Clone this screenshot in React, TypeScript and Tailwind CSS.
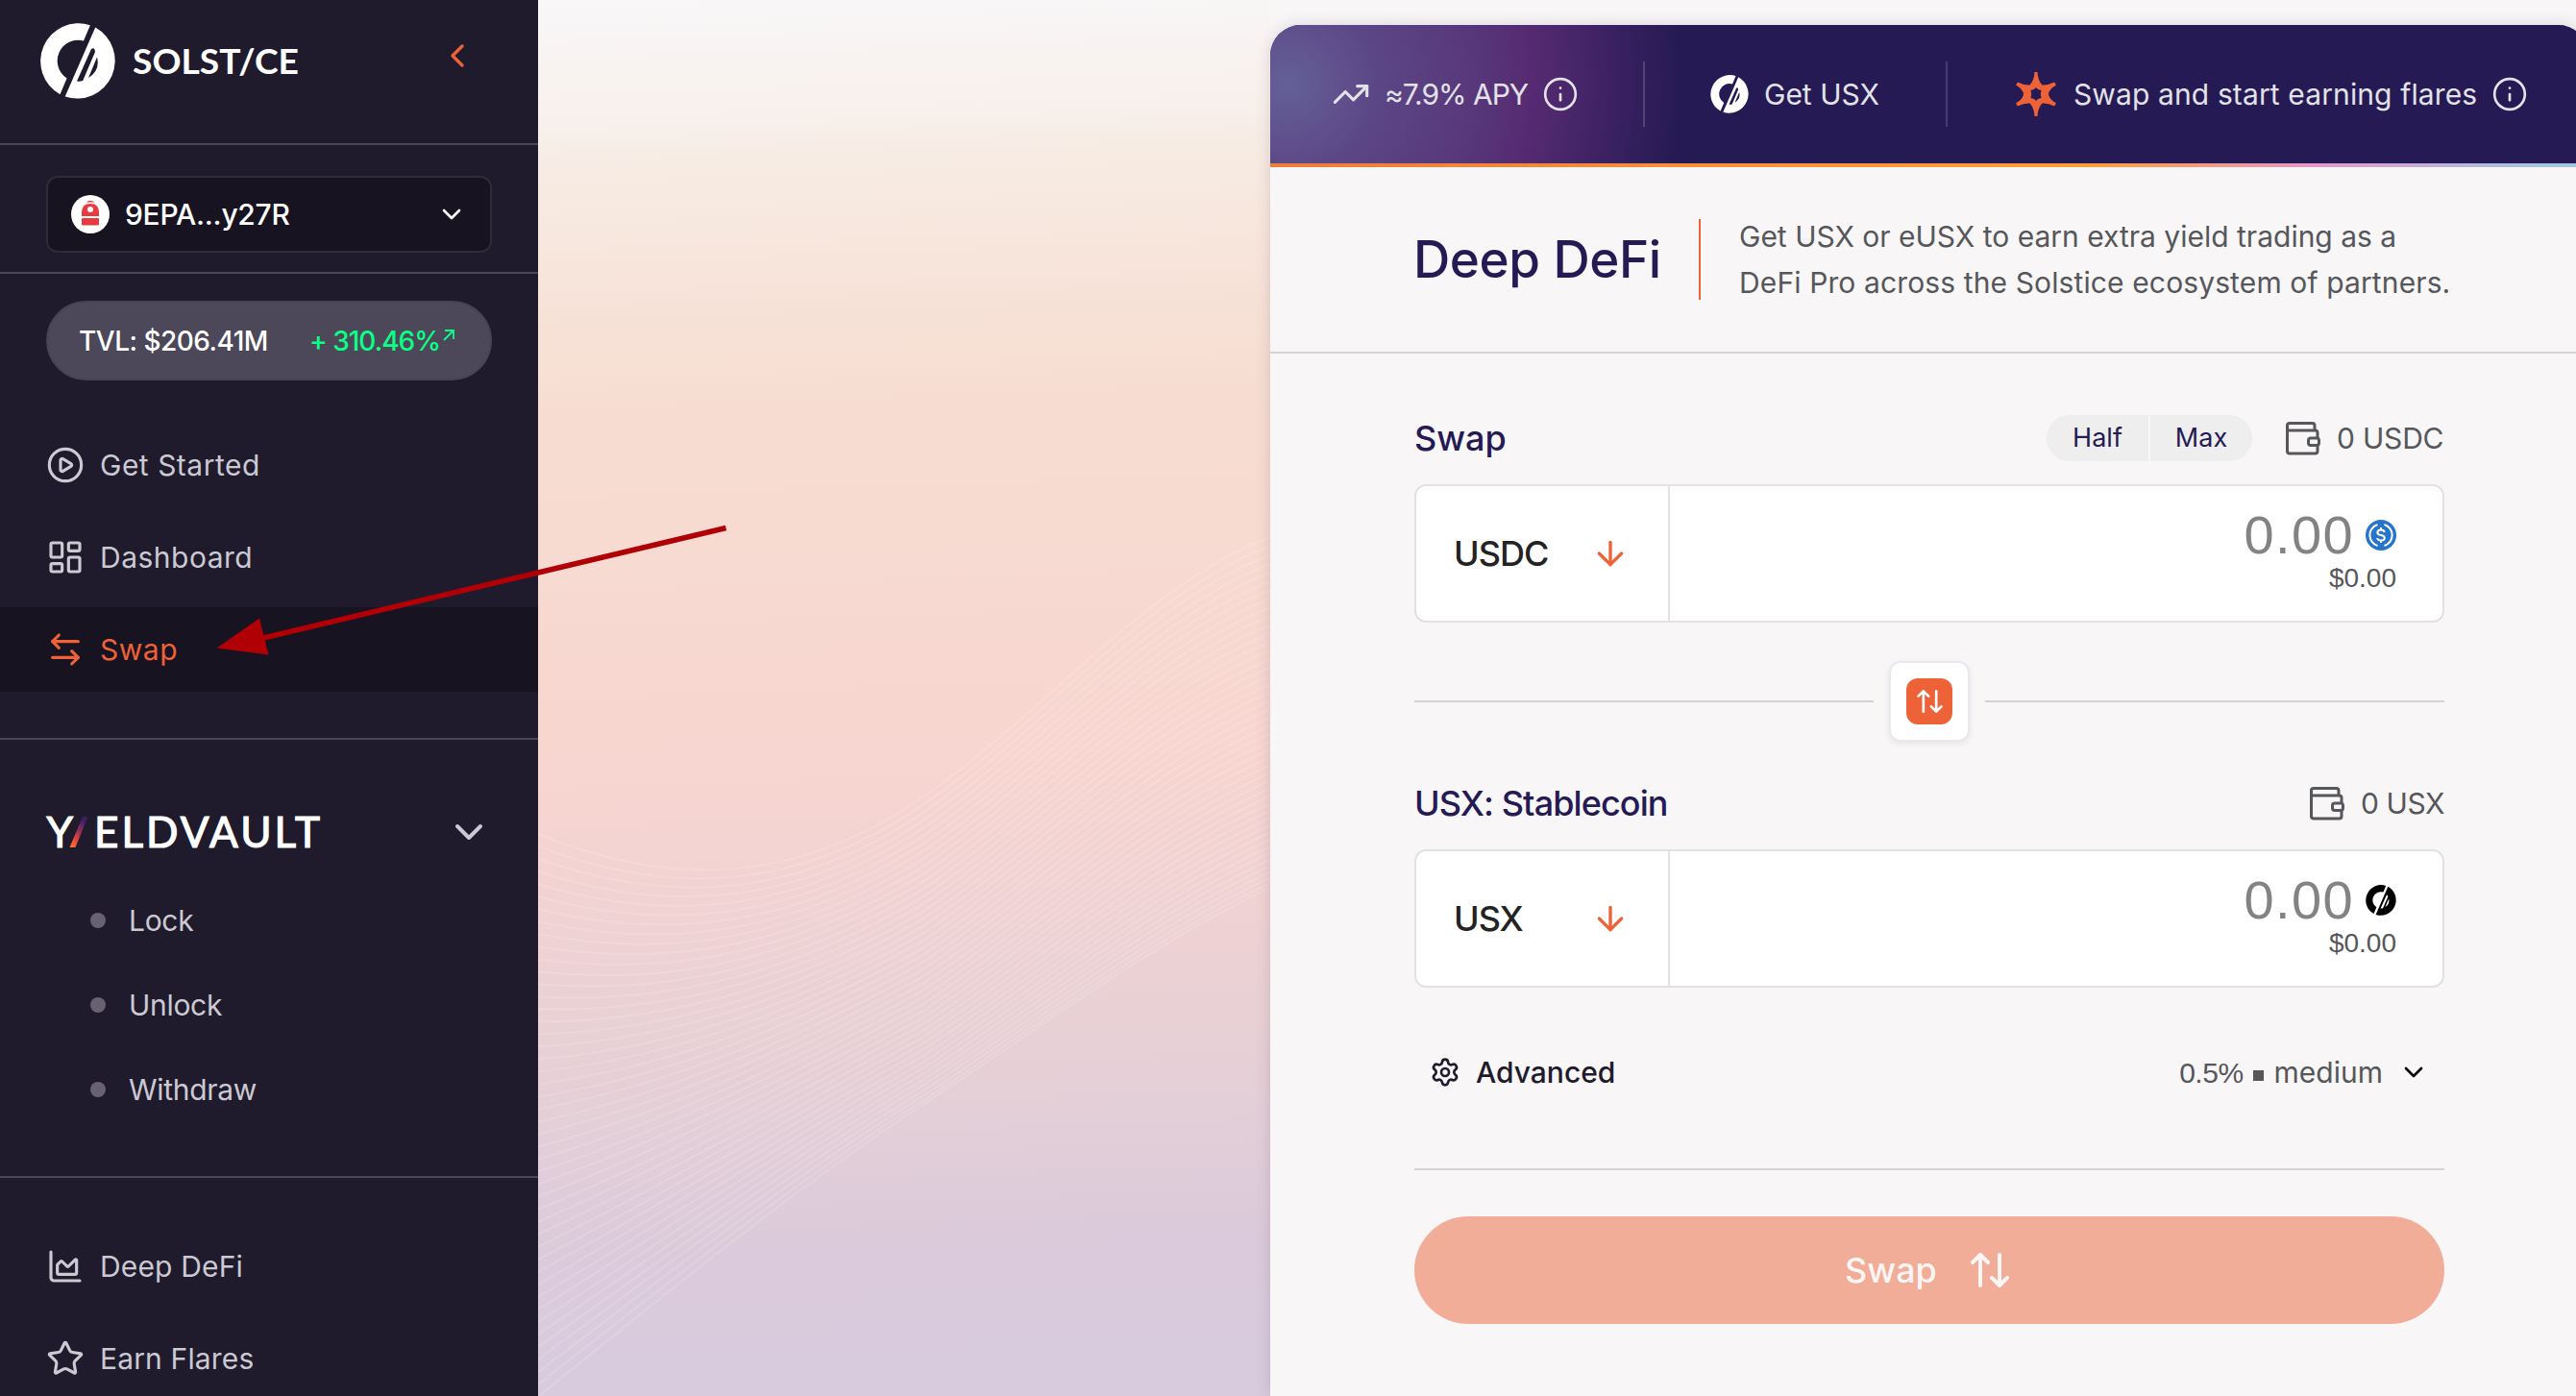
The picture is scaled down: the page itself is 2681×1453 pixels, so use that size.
import React, { useState } from "react";
import {
  ArrowDown,
  ArrowLeftRight,
  ChartArea,
  ChevronDown,
  ChevronLeft,
  CirclePlay,
  Info,
  LayoutDashboard,
  Settings,
  Star,
  TrendingUp,
} from "lucide-react";

const navItems = [
  { label: "Get Started", icon: CirclePlay },
  { label: "Dashboard", icon: LayoutDashboard },
  { label: "Swap", icon: ArrowLeftRight },
];

const vaultItems = ["Lock", "Unlock", "Withdraw"];

const moreItems = [
  { label: "Deep DeFi", icon: ChartArea },
  { label: "Earn Flares", icon: Star },
];

const SolsticeMark: React.FC<{ className?: string }> = ({ className }) => (
  <svg viewBox="0 0 78 79" className={className} fill="currentColor">
    <path d="M51.900 2.200A39.500 39.500 0 0 0 20.500 74.300L27.600 57.400A21.500 21.500 0 0 1 45 18.600Z" />
    <path
      fillRule="evenodd"
      d="M57.200 4.600A39.400 39.400 0 0 1 25.700 76.500ZM38 60.500 53 27Q56.500 24.500 57 30L44.200 60Q41 61 38 60.500ZM59 35.500Q62.500 49 50 57Z"
    />
  </svg>
);

const Wallet: React.FC = () => (
  <svg
    viewBox="0 0 36 35"
    className="h-[35px] w-9 shrink-0"
    fill="none"
    stroke="currentColor"
    strokeWidth="3"
    strokeLinejoin="round"
    strokeLinecap="round"
  >
    <path d="M30 8V4Q30 1.500 27.500 1.500H4Q1.500 1.500 1.500 4V30.500Q1.500 33 4 33H30.500Q33 33 33 30.500V25" />
    <path d="M1.500 9H30.500Q33 9 33 11.500V16.500" />
    <rect x="23.500" y="17" width="11" height="7.500" rx="2.500" />
  </svg>
);

const UpDown: React.FC<{ className?: string }> = ({ className }) => (
  <svg
    viewBox="0 0 40 36"
    className={className}
    fill="none"
    stroke="currentColor"
    strokeWidth="4"
    strokeLinecap="round"
    strokeLinejoin="round"
  >
    <path d="M10 34V2M2 10l8-8 8 8M30 2v32M22 26l8 8 8-8" />
  </svg>
);

const Flare: React.FC = () => (
  <svg viewBox="0 0 42 46" className="h-[46px] w-[42px]" fill="#ed6237">
    <path
      fillRule="evenodd"
      d="M19.500 0H22.500Q23 9 27.500 13.500Q33 14 40 10.500L42 13.500Q34.500 18 34 23Q34.500 28 42 32.500L40 35.500Q33 32 27.500 32.500Q23 37 22.500 46H19.500Q19 37 14.500 32.500Q9 32 2 35.500L0 32.500Q7.500 28 8 23Q7.500 18 0 13.500L2 10.500Q9 14 14.500 13.500Q19 9 19.500 0ZM21 16Q19.500 18.500 15.500 19Q17 23 15.500 27Q19.500 27.500 21 30Q22.500 27.500 26.500 27Q25 23 26.500 19Q22.500 18.500 21 16Z"
    />
  </svg>
);

const UsdcMark: React.FC = () => (
  <svg viewBox="0 0 32 32" className="size-8">
    <circle cx="16" cy="16" r="16" fill="#2775ca" />
    <g fill="none" stroke="#fff" strokeWidth="2">
      <path d="M12.500 5A11.500 11.500 0 0 0 12.500 27M19.500 5A11.500 11.500 0 0 1 19.500 27" />
      <path d="M19.700 13Q19.300 10.500 16 10.500Q12.400 10.500 12.400 13.200Q12.400 15.400 16 16Q19.800 16.600 19.800 19Q19.800 21.600 16 21.600Q12.500 21.600 12.200 19M16 8v2.500M16 21.600V24" />
    </g>
  </svg>
);

const WalletAvatar: React.FC = () => (
  <svg viewBox="0 0 40 40" className="size-10">
    <circle cx="20" cy="20" r="20" fill="#fff" />
    <path d="M15.500 7.500Q20 4 24.500 7.500Z" fill="#e63c41" />
    <path d="M11 22V18Q11 9 20 9Q29 9 29 18V22Z" fill="#e63c41" />
    <rect x="11" y="24" width="18" height="7.500" rx="1" fill="#e63c41" />
    <circle cx="20" cy="15" r="3" fill="#fff" />
  </svg>
);

// Fan of thin lines between an upper and a lower curve
const upper = [868, 925, 920, 830, 740, 600, 556];
const lower = [1454, 1340, 1235, 1150, 1065, 980, 920];
const Waves: React.FC = () => (
  <svg
    viewBox="560 0 762 1453"
    className="h-full w-[762px]"
    fill="none"
    stroke="#fff"
    strokeOpacity="0.14"
    strokeWidth="2"
  >
    {Array.from({ length: 46 }, (_, i) => {
      const t = i / 45;
      const y = upper.map((u, k) => {
        const e = k < 3 ? t : 1 - Math.pow(1 - t, 1.15);
        return (u + (lower[k] - u) * e).toFixed(1);
      });
      return (
        <path
          key={i}
          d={`M560 ${y[0]}C700 ${y[1]} 830 ${y[2]} 960 ${y[3]}C1090 ${y[4]} 1200 ${y[5]} 1330 ${y[6]}`}
        />
      );
    })}
  </svg>
);

const Sidebar: React.FC = () => {
  const [active, setActive] = useState("Swap");

  return (
    <aside className="flex h-full w-[560px] shrink-0 flex-col bg-[#1f1a2c] text-[30px] text-[#cbc9d2]">
      <div className="flex h-[151px] shrink-0 items-start border-b-2 border-[#4a4558] pl-[42px] pt-6">
        <SolsticeMark className="h-[79px] w-[78px] text-white" />
        <svg viewBox="0 0 176 48" className="ml-4 mt-4 h-12 w-44 overflow-visible">
          <text
            x="2"
            y="37"
            textLength="173"
            lengthAdjust="spacingAndGlyphs"
            fill="#fff"
            className="font-[Lato,sans-serif] text-[36px] font-bold"
          >
            SOLST/CE
          </text>
        </svg>
        <ChevronLeft size={40} className="ml-36 mt-3.5 text-[#ed6237]" />
      </div>

      <div className="shrink-0 border-b-2 border-[#4a4558] px-12 pb-5 pt-8">
        <button className="flex h-20 w-full items-center rounded-xl border-2 border-[#2f2b38] bg-[#171320] pl-6 pr-6 text-white">
          <WalletAvatar />
          <span className="ml-4 text-[30px] font-medium tracking-[-0.3px]">9EPA...y27R</span>
          <ChevronDown size={32} className="ml-auto" />
        </button>
      </div>

      <div className="mx-12 mt-7 flex h-[83px] shrink-0 items-center rounded-full border-2 border-[#474254] bg-[#4c4759] pl-8 text-[28px] font-medium text-white">
        <span className="w-60 whitespace-nowrap tracking-[-0.5px]">TVL: $206.41M</span>
        <span className="whitespace-nowrap tracking-[-1px] text-[#0aff84]">+ 310.46%</span>
        <svg
          viewBox="0 0 12 12"
          className="mb-3 ml-[3px] size-3"
          fill="none"
          stroke="#0aff84"
          strokeWidth="1.8"
        >
          <path d="M1 11 11 1M2 1h9v9" />
        </svg>
      </div>

      <nav className="mt-11 flex shrink-0 flex-col gap-2 tracking-[0.5px]">
        {navItems.map(({ label, icon: Icon }) => (
          <button
            key={label}
            onClick={() => setActive(label)}
            className={`flex h-[88px] items-center gap-4 pl-12 ${
              active === label ? "bg-[#171320] text-[#ed6237]" : ""
            }`}
          >
            <Icon size={40} strokeWidth={1.9} />
            {label}
          </button>
        ))}
      </nav>

      <div className="mt-12 h-[458px] shrink-0 border-y-2 border-[#4a4558] pt-[72px]">
        <div className="flex h-12 items-center pl-12">
          <svg viewBox="0 0 290 56" className="h-14 w-[290px] overflow-visible">
            <defs>
              <linearGradient id="slash" x1="0" y1="1" x2="0.6" y2="0">
                <stop offset="0" stopColor="#ff7a35" />
                <stop offset="0.3" stopColor="#ee4a35" />
                <stop offset="0.65" stopColor="#8a2f5c" />
                <stop offset="1" stopColor="#3a1f66" />
              </linearGradient>
            </defs>
            <g
              fill="#fff"
              stroke="#fff"
              strokeWidth="1.2"
              className="font-[Lato,sans-serif] text-[44px] font-normal"
            >
              <text x="0.500" y="44">
                Y
              </text>
              <text x="50" y="44" textLength="235">
                ELDVAULT
              </text>
            </g>
            <path d="M24.500 44 38 12h5.500L30.500 44Z" fill="url(#slash)" />
          </svg>
          <ChevronDown size={48} className="ml-[126px]" />
        </div>
        <ul className="mt-6 tracking-[-0.3px]">
          {vaultItems.map((item) => (
            <li key={item} className="flex h-[88px] items-center gap-6 pl-[94px]">
              <span className="size-4 rounded-full bg-[#676172]" />
              {item}
            </li>
          ))}
        </ul>
      </div>

      <nav className="mt-12 flex shrink-0 flex-col gap-2 tracking-[0.15px]">
        {moreItems.map(({ label, icon: Icon }) => (
          <button key={label} className="flex h-[88px] items-center gap-4 pl-12">
            <Icon size={40} strokeWidth={1.9} />
            {label}
          </button>
        ))}
      </nav>
    </aside>
  );
};

const TokenBox: React.FC<{ token: string; mark: React.ReactNode }> = ({ token, mark }) => (
  <div className="mt-6 flex h-36 rounded-xl border-2 border-[#e2e2e3] bg-white">
    <button className="flex w-[264px] items-center justify-between border-r-2 border-[#e2e2e3] pl-[39px] pr-10">
      <span className="text-[36px] font-medium tracking-[-1px] text-[#232323]">{token}</span>
      <ArrowDown size={40} className="text-[#ed6237]" />
    </button>
    <div className="flex flex-1 flex-col items-end pr-12 pt-[23px] font-['Liberation_Sans',Arial,sans-serif]">
      <div className="flex h-14 items-center gap-3">
        <span className="text-[56px] leading-[56px] tracking-[1.4px] text-[#838383]">0.00</span>
        {mark}
      </div>
      <span className="mt-px text-[28px] leading-8 text-[#56575b]">$0.00</span>
    </div>
  </div>
);

const SwapCard: React.FC = () => (
  <section className="mt-[26px] flex w-[1372px] shrink-0 flex-col overflow-hidden rounded-t-[32px] bg-[#f8f6f7] shadow-[0_0_16px_rgba(60,30,60,0.16)]">
    <header className="flex h-36 shrink-0 items-center bg-[#251a54] bg-[radial-gradient(circle_at_18px_62px,#646098_0px,#5c4685_95px,#583a7c_180px,#562a72_255px,#251a54_410px)] pl-16 text-[30px] text-[#e2e2e8]">
      <TrendingUp size={40} strokeWidth={1.9} />
      <span className="ml-[15px] w-[164px] whitespace-nowrap tracking-[-1px]">≈7.9% APY</span>
      <Info size={38} strokeWidth={1.7} />
      <span className="ml-[67px] h-[68px] w-0.5 bg-[#514478]" />
      <SolsticeMark className="ml-[68px] size-10 text-white" />
      <span className="ml-4 w-[189px] whitespace-nowrap">Get USX</span>
      <span className="h-[68px] w-0.5 bg-[#463b70]" />
      <span className="ml-[71px]">
        <Flare />
      </span>
      <span className="ml-[18px] w-[435px] whitespace-nowrap tracking-[0.12px]">
        Swap and start earning flares
      </span>
      <Info size={38} strokeWidth={1.7} className="shrink-0" />
    </header>
    <div className="h-1 shrink-0 bg-[linear-gradient(90deg,#ec7d3c_0%,#ff9f38_62%,#e498c9_79%,#a5c4e0_96%)]" />

    <div className="flex h-[194px] shrink-0 items-center border-b-2 border-[#d3d2d4] pl-[149px]">
      <h1 className="w-[297px] whitespace-nowrap pt-0.5 text-[53px] font-medium tracking-[-0.4px] text-[#251a54]">
        Deep DeFi
      </h1>
      <p className="flex h-[84px] items-center whitespace-nowrap border-l-2 border-[#ed6237] pl-10 text-[30px] leading-[48px] text-[#56575b]">
        <span>
          Get USX or eUSX to earn extra yield trading as a
          <br />
          <span className="tracking-[0.12px]">DeFi Pro across the Solstice ecosystem of partners.</span>
        </span>
      </p>
    </div>

    <div className="px-[150px] pt-16">
      <div className="flex h-12 items-center">
        <h2 className="text-[36px] font-medium text-[#251a54]">Swap</h2>
        <div className="ml-auto flex h-12 overflow-hidden rounded-full bg-[#eeeeee] text-[27px] text-[#251a54]">
          <button className="w-[108px] border-r-2 border-[#f8f6f7]">Half</button>
          <button className="w-[106px]">Max</button>
        </div>
        <div className="ml-[35px] flex items-center gap-[17px] text-[30px] text-[#56575b]">
          <Wallet />
          <span className="w-28 whitespace-nowrap tracking-[-0.2px]">0 USDC</span>
        </div>
      </div>
      <TokenBox token="USDC" mark={<UsdcMark />} />

      <div className="mt-10 flex items-center gap-4">
        <span className="h-0.5 flex-1 bg-[#d3d2d4]" />
        <button className="flex size-[84px] items-center justify-center rounded-xl border-2 border-[#e8e8ef] bg-white shadow-[0_2px_6px_rgba(0,0,0,0.08)]">
          <span className="flex size-12 items-center justify-center rounded-xl bg-[#ed6237] text-white">
            <UpDown className="h-6 w-[27px]" />
          </span>
        </button>
        <span className="h-0.5 flex-1 bg-[#d3d2d4]" />
      </div>

      <div className="mt-10 flex h-12 items-center justify-between">
        <h2 className="text-[36px] font-medium tracking-[-0.9px] text-[#251a54]">USX: Stablecoin</h2>
        <div className="flex items-center gap-[17px] text-[30px] text-[#56575b]">
          <Wallet />
          <span className="w-[87px] whitespace-nowrap tracking-[-0.4px]">0 USX</span>
        </div>
      </div>
      <TokenBox token="USX" mark={<SolsticeMark className="size-8 text-black" />} />

      <div className="mt-16 flex h-12 items-center pl-4 pr-4 text-[30px]">
        <Settings size={32} className="text-[#1f1a2c]" />
        <span className="ml-4 font-medium text-[#1f1a2c]">Advanced</span>
        <span className="ml-auto flex items-center text-[#56575b]">
          <span className="font-['Liberation_Sans',Arial,sans-serif] tracking-[-0.5px]">0.5%</span>
          <i className="ml-2.5 mr-[11px] mt-1.5 size-[11px] bg-[#56575b]" />
          medium
        </span>
        <ChevronDown size={32} className="ml-4 text-black" />
      </div>

      <div className="mt-[76px] h-0.5 bg-[#d3d2d4]" />
      <button className="mt-12 flex h-28 w-full items-center justify-center gap-[35px] rounded-full bg-[#f1ad98] pr-[5px] text-[36px] font-medium text-[#fdf6f4]">
        Swap
        <UpDown className="h-9 w-10" />
      </button>
    </div>
  </section>
);

export default function App() {
  return (
    <main className="relative flex h-[1453px] w-full overflow-hidden bg-[#f8f6f7] font-[Inter,sans-serif]">
      <Sidebar />
      <div className="flex min-w-0 flex-1 bg-[linear-gradient(178deg,#f9f7f9_0px,#f8f2ef_100px,#f7ebe2_190px,#f7e2d8_330px,#f7ddd1_430px,#f7dad1_600px,#f7d5d0_800px,#efd2d3_980px,#e3cfd7_1170px,#dbcadb_1310px,#d8cbde_1453px)]">
        <div className="flex h-full w-[762px] shrink-0">
          <Waves />
        </div>
        <div className="flex w-[1359px] shrink-0 bg-[linear-gradient(#f8f6f7_0px,#f8f6f7_60px,transparent_60px)]">
          <SwapCard />
        </div>
      </div>

      {/* pointer towards the active menu entry */}
      <svg className="pointer-events-none absolute left-0 top-0 h-[1453px] w-[800px]" viewBox="0 0 800 1453">
        <path d="M755.500 549.500 270 665" stroke="#b00006" strokeWidth="5.500" />
        <path d="M225.500 674.500 270 643.500 279.500 681.500Z" fill="#b00006" />
      </svg>
    </main>
  );
}
